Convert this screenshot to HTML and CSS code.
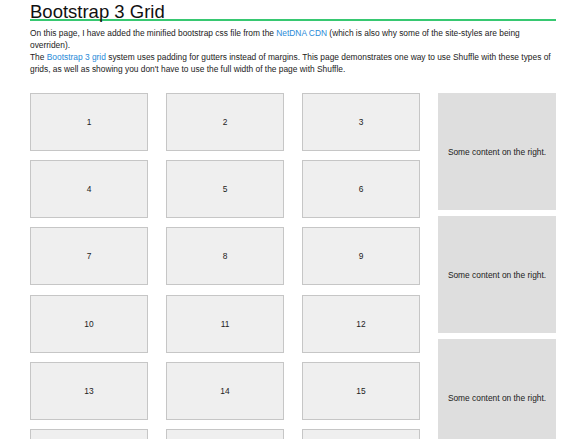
FILE: index.html
```html
<!DOCTYPE html>
<html>
<head>
<meta charset="utf-8">
<link rel="stylesheet" href="styles.css">
</head>
<body>
<div class="page">
  <h1 class="title">Bootstrap 3 Grid</h1>
  <p class="intro">On this page, I have added the minified bootstrap css file from the <a href="#">NetDNA CDN</a> (which is also why some of the site-styles are being overriden).<br>The <a href="#">Bootstrap 3 grid</a> system uses padding for gutters instead of margins. This page demonstrates one way to use Shuffle with these types of grids, as well as showing you don't have to use the full width of the page with Shuffle.</p>
  <div class="layout">
    <div class="grid">
      <div class="item">1</div><div class="item">2</div><div class="item">3</div>
      <div class="item">4</div><div class="item">5</div><div class="item">6</div>
      <div class="item">7</div><div class="item">8</div><div class="item">9</div>
      <div class="item">10</div><div class="item">11</div><div class="item">12</div>
      <div class="item">13</div><div class="item">14</div><div class="item">15</div>
      <div class="item">16</div><div class="item">17</div><div class="item">18</div>
    </div>
    <div class="side">
      <div class="side-box">Some content on the right.</div>
      <div class="side-box">Some content on the right.</div>
      <div class="side-box">Some content on the right.</div>
      <div class="side-box">Some content on the right.</div>
    </div>
  </div>
</div>
</body>
</html>
```
FILE: styles.css
```css
html, body {
  margin: 0;
  padding: 0;
  background: #fff;
}
body {
  font-family: "Liberation Sans", Arial, sans-serif;
  color: #222;
}
.page {
  width: 526px;
  margin-left: 30px;
}
.title {
  margin: 4px 0 0 0;
  font-size: 18.5px;
  font-weight: normal;
  line-height: 15px;
  color: #111;
  border-bottom: 2px solid #37c871;
}
.intro {
  margin: 6px 0 0 0;
  font-size: 8.4px;
  line-height: 12px;
  color: #222;
}
.intro a {
  color: #288ad8;
  text-decoration: none;
}
.layout {
  display: flex;
  gap: 18px;
  margin-top: 18px;
  align-items: flex-start;
}
.grid {
  display: grid;
  grid-template-columns: repeat(3, 118px);
  column-gap: 18px;
  row-gap: 9.2px;
}
.item {
  box-sizing: border-box;
  height: 58px;
  background: #efefef;
  border: 1px solid #c6c6c6;
  display: flex;
  align-items: center;
  justify-content: center;
  font-size: 8.4px;
  color: #222;
}
.side {
  width: 118px;
  display: flex;
  flex-direction: column;
  gap: 6px;
}
.side-box {
  height: 117px;
  background: #dedede;
  display: flex;
  align-items: center;
  justify-content: center;
  font-size: 8.4px;
  color: #222;
}
```
